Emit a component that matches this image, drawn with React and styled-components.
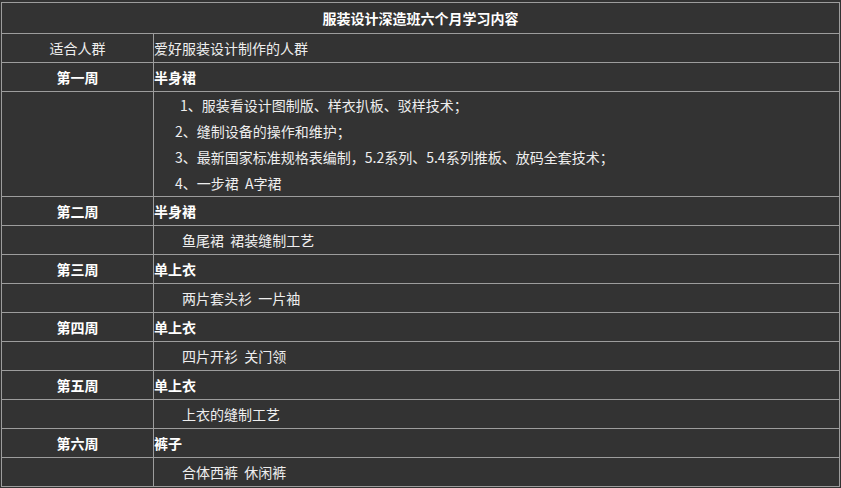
import React from "react";
import styled, { createGlobalStyle } from "styled-components";

const GlobalStyle = createGlobalStyle`
  html, body {
    margin: 0;
    padding: 0;
    background: #333333;
  }
  body {
    font-family: "Noto Sans CJK SC", "Noto Sans", sans-serif;
    font-size: 14px;
    color: #f2f2f2;
    word-spacing: 3px;
  }
`;

const Table = styled.div`
  margin: 2px 0 0 1px;
  width: 839px;
  display: grid;
  grid-template-columns: 152px 686px;
  border-top: 1px solid #9d9d9d;
  border-left: 1px solid #9d9d9d;
  box-sizing: border-box;
`;

const Cell = styled.div`
  box-sizing: border-box;
  border-right: 1px solid #9d9d9d;
  border-bottom: 1px solid #9d9d9d;
  height: ${(p) => p.$h || 29}px;
  display: flex;
  align-items: center;
  justify-content: ${(p) => (p.$center ? "center" : "flex-start")};
  padding-left: ${(p) => p.$indent || 0}px;
  font-weight: ${(p) => (p.$bold ? 700 : 400)};
  color: ${(p) => (p.$bold ? "#ffffff" : "#eeeeee")};
  white-space: pre;
  line-height: 1;
`;

const Title = styled(Cell)`
  grid-column: 1 / span 2;
  height: 31px;
`;

const ItemList = styled.div`
  box-sizing: border-box;
  border-right: 1px solid #9d9d9d;
  border-bottom: 1px solid #9d9d9d;
  height: 105px;
  display: flex;
  flex-direction: column;
  padding-left: 21px;
`;

const Item = styled.div`
  height: 26px;
  display: flex;
  align-items: center;
  padding-left: ${(p) => p.$shift || 0}px;
  white-space: pre;
  color: #eeeeee;
`;

const weeks = [
  { week: "第二周", topic: "半身裙", detail: "鱼尾裙 裙装缝制工艺" },
  { week: "第三周", topic: "单上衣", detail: "两片套头衫 一片袖" },
  { week: "第四周", topic: "单上衣", detail: "四片开衫 关门领" },
  { week: "第五周", topic: "单上衣", detail: "上衣的缝制工艺" },
  { week: "第六周", topic: "裤子", detail: "合体西裤 休闲裤" },
];

const firstWeek = [
  "1、服装看设计图制版、样衣扒板、驳样技术；",
  "2、缝制设备的操作和维护；",
  "3、最新国家标准规格表编制，5.2系列、5.4系列推板、放码全套技术；",
  "4、一步裙 A字裙",
];

const App = () => {
  return (
    <>
      <GlobalStyle />
      <Table>
        <Title $center $bold>
          服装设计深造班六个月学习内容
        </Title>

        <Cell $center>适合人群</Cell>
        <Cell>爱好服装设计制作的人群</Cell>

        <Cell $center $bold>
          第一周
        </Cell>
        <Cell $bold>半身裙</Cell>

        <Cell $h={105} />
        <ItemList>
          {firstWeek.map((line, i) => (
            <Item key={i} $shift={i === 0 ? 5 : 0}>
              {line}
            </Item>
          ))}
        </ItemList>

        {weeks.map((w) => (
          <React.Fragment key={w.week}>
            <Cell $center $bold>
              {w.week}
            </Cell>
            <Cell $bold>{w.topic}</Cell>
            <Cell />
            <Cell $indent={28}>{w.detail}</Cell>
          </React.Fragment>
        ))}
      </Table>
    </>
  );
};

export default App;
